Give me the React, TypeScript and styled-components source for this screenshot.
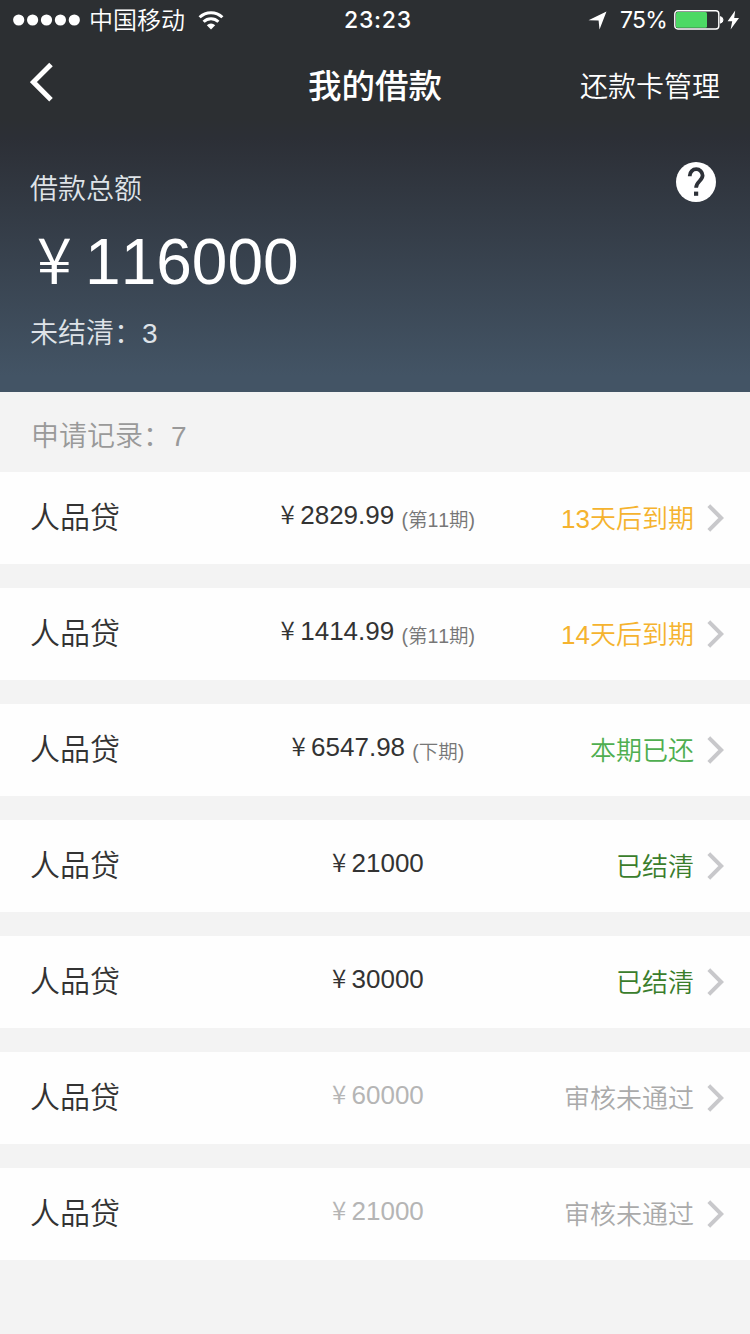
import React from 'react';
import styled, { createGlobalStyle } from 'styled-components';

const GlobalStyle = createGlobalStyle`
  * { box-sizing: border-box; }
  body {
    margin: 0;
    background: #f3f3f3;
    font-family: "Liberation Sans", "Noto Sans CJK SC", sans-serif;
    font-kerning: none;
  }
`;

const Screen = styled.main`
  width: 750px;
  min-height: 1334px;
  background: #f3f3f3;
`;

const Hero = styled.header`
  height: 392px;
  color: #fff;
  background: linear-gradient(#2c2f32 0, #2c2f32 118px, #2c2f36 138px, #435465 376px, #435465 100%);
`;

const StatusBar = styled.div`
  display: grid;
  grid-template-columns: 1fr auto 1fr;
  align-items: center;
  height: 40px;
  padding: 0 10px 0 13px;
`;

const StatusGroup = styled.div<{ $end?: boolean }>`
  display: flex;
  align-items: center;
  justify-content: ${(p) => (p.$end ? 'flex-end' : 'flex-start')};
`;

const Carrier = styled.span`
  margin: 0 13px 0 9px;
  padding-top: 2px;
  font-size: 24px;
  font-weight: 350;
  line-height: 38px;
`;

const Clock = styled.time`
  padding-left: 3px;
  font: 500 23px/40px Inter, sans-serif;
  letter-spacing: 0.8px;
`;

const Percent = styled.span`
  margin: 0 7px 0 13px;
  font: 400 23px/40px Inter, sans-serif;
  letter-spacing: -0.8px;
`;

const NavBar = styled.nav`
  display: grid;
  grid-template-columns: 1fr auto 1fr;
  align-items: center;
  height: 88px;
  padding: 0 30px;
`;

const BackButton = styled.button`
  display: flex;
  width: 40px;
  padding: 0 0 4px;
  border: 0;
  background: none;
`;

const Title = styled.h1`
  margin: 0;
  padding-top: 6px;
  font-size: 33.5px;
  font-weight: 500;
  line-height: 82px;
`;

const NavLink = styled.a`
  justify-self: end;
  padding-top: 8px;
  font-size: 28px;
  font-weight: 350;
  line-height: 80px;
`;

const Summary = styled.section`
  display: flex;
  justify-content: space-between;
  padding: 34px 34px 0 30px;
`;

const Caption = styled.p`
  margin: 0;
  padding-top: 2px;
  color: #dfe3e8;
  font-size: 28px;
  font-weight: 350;
  line-height: 52px;
`;

const Total = styled.p`
  margin: 0;
  padding-top: 1px;
  font-size: 64px;
  line-height: 90px;
  height: 90px;
`;

const Yen = styled.span`
  display: inline-block;
  width: 0.86em;
  padding-right: 0.1em;
  font-family: "Noto Sans CJK SC", sans-serif;
  font-weight: 350;
  line-height: 1;
  text-align: center;
`;

const RecordCount = styled.h2`
  margin: 0;
  height: 80px;
  padding: 5px 31px 0;
  color: #999;
  font-size: 28px;
  font-weight: 350;
  line-height: 80px;
`;

const List = styled.ul`
  display: flex;
  flex-direction: column;
  gap: 24px;
  margin: 0;
  padding: 0;
  list-style: none;
`;

const Row = styled.li`
  display: flex;
  align-items: center;
  height: 92px;
  padding: 0 26px 0 30px;
  background: #fefefe;
`;

const Name = styled.span`
  width: 200px;
  color: #333;
  font-size: 30px;
  font-weight: 350;
  line-height: 92px;
`;

const Amount = styled.span<{ $muted?: boolean }>`
  width: 293px;
  height: 40px;
  margin-bottom: 7px;
  color: ${(p) => (p.$muted ? '#b5b5b5' : '#333')};
  font-size: 26px;
  line-height: 40px;
  text-align: center;
  white-space: nowrap;
`;

const Term = styled.small`
  color: #777;
  font-size: 19.5px;
  font-weight: 350;
  line-height: 1;
  position: relative;
  top: 3px;
`;

const Status = styled.span<{ $color: string }>`
  flex: 1;
  padding: 2px 13px 0 0;
  color: ${(p) => p.$color};
  font-size: 26px;
  font-weight: 350;
  line-height: 90px;
  text-align: right;
  white-space: nowrap;
`;

const AMBER = '#f5b32e';
const GREEN = '#4fae50';
const DARK_GREEN = '#3a7d2c';
const GREY = '#aaa';

interface Loan {
  amount: string;
  term?: string;
  status: string;
  color: string;
  muted?: boolean;
}

const loans: Loan[] = [
  { amount: '2829.99', term: '(第11期)', status: '13天后到期', color: AMBER },
  { amount: '1414.99', term: '(第11期)', status: '14天后到期', color: AMBER },
  { amount: '6547.98', term: '(下期)', status: '本期已还', color: GREEN },
  { amount: '21000', status: '已结清', color: DARK_GREEN },
  { amount: '30000', status: '已结清', color: DARK_GREEN },
  { amount: '60000', status: '审核未通过', color: GREY, muted: true },
  { amount: '21000', status: '审核未通过', color: GREY, muted: true },
];

const SignalDots = () => (
  <svg width="67" height="12" viewBox="0 0 67 12" fill="#fff">
    {[5.7, 19.6, 33.5, 47.4, 61.3].map((cx) => (
      <circle key={cx} cx={cx} cy="6" r="5.6" />
    ))}
  </svg>
);

const WifiIcon = () => (
  <svg width="26" height="19" viewBox="0 0 26 19" fill="none" stroke="#fff" strokeWidth="3">
    <path d="M1.6 6.3a16.3 16.3 0 0 1 22.8 0" />
    <path d="M5.6 10.8a10.6 10.6 0 0 1 14.8 0" />
    <path d="M13 18.4l-4.2-4.2a6 6 0 0 1 8.4 0z" fill="#fff" stroke="none" />
  </svg>
);

const LocationIcon = () => (
  <svg width="19" height="19" viewBox="0 0 19 19" fill="#fff">
    <path d="M18.5.5L11.5 18.5 10.6 9.6.5 9.3z" />
  </svg>
);

const BatteryIcon = () => (
  <svg width="50" height="20" viewBox="0 0 50 20">
    <rect x="0.8" y="0.8" width="44" height="18.2" rx="3" fill="none" stroke="#fff" strokeWidth="1.4" />
    <rect x="2" y="2" width="31" height="15.8" rx="1.5" fill="#4cd964" />
    <path d="M46.4 6.6a3.4 3.4 0 0 1 0 6.6z" fill="#fff" stroke="#fff" />
  </svg>
);

const BoltIcon = styled.svg`
  margin-left: 3px;
`;

const BackIcon = () => (
  <svg width="24" height="40" viewBox="0 0 24 40" fill="none" stroke="#fff" strokeWidth="5">
    <path d="M21 2.5L3.4 20.1 21 37.8" />
  </svg>
);

const HelpIcon = () => (
  <svg width="40" height="40" viewBox="0 0 40 40">
    <circle cx="20" cy="20" r="20" fill="#fff" />
    <path
      d="M13.8 14.2v-.6a6.4 6.4 0 0 1 12.8 0c0 5-6.5 6-6.5 12.2"
      fill="none"
      stroke="#2d3138"
      strokeWidth="3.8"
    />
    <rect x="18" y="29.6" width="4.2" height="4.2" fill="#2d3138" />
  </svg>
);

const HelpButton = styled.button`
  display: flex;
  width: 40px;
  height: 40px;
  padding: 0;
  border: 0;
  background: none;
`;

const ChevronIcon = () => (
  <svg width="17" height="28" viewBox="0 0 17 28" fill="none" stroke="#c8c8cb" strokeWidth="4">
    <path d="M1.8 1.6L14.2 14 1.8 26.4" />
  </svg>
);

export default function App() {
  return (
    <Screen>
      <GlobalStyle />
      <Hero>
        <StatusBar>
          <StatusGroup>
            <SignalDots />
            <Carrier>中国移动</Carrier>
            <WifiIcon />
          </StatusGroup>
          <Clock>23:23</Clock>
          <StatusGroup $end>
            <LocationIcon />
            <Percent>75%</Percent>
            <BatteryIcon />
            <BoltIcon width="13" height="20" viewBox="0 0 13 20" fill="#fff">
              <path d="M8.2.5L.6 11.2h4.6L3.6 19.5 12 8H7.2z" />
            </BoltIcon>
          </StatusGroup>
        </StatusBar>
        <NavBar>
          <BackButton aria-label="返回">
            <BackIcon />
          </BackButton>
          <Title>我的借款</Title>
          <NavLink>还款卡管理</NavLink>
        </NavBar>
        <Summary>
          <div>
            <Caption>借款总额</Caption>
            <Total>
              <Yen>¥</Yen>116000
            </Total>
            <Caption>未结清：3</Caption>
          </div>
          <HelpButton aria-label="帮助">
            <HelpIcon />
          </HelpButton>
        </Summary>
      </Hero>
      <RecordCount>申请记录：7</RecordCount>
      <List>
        {loans.map((loan, i) => (
          <Row key={i}>
            <Name>人品贷</Name>
            <Amount $muted={loan.muted}>
              <Yen>¥</Yen>
              {loan.amount}
              {loan.term && <> <Term>{loan.term}</Term></>}
            </Amount>
            <Status $color={loan.color}>{loan.status}</Status>
            <ChevronIcon />
          </Row>
        ))}
      </List>
    </Screen>
  );
}
